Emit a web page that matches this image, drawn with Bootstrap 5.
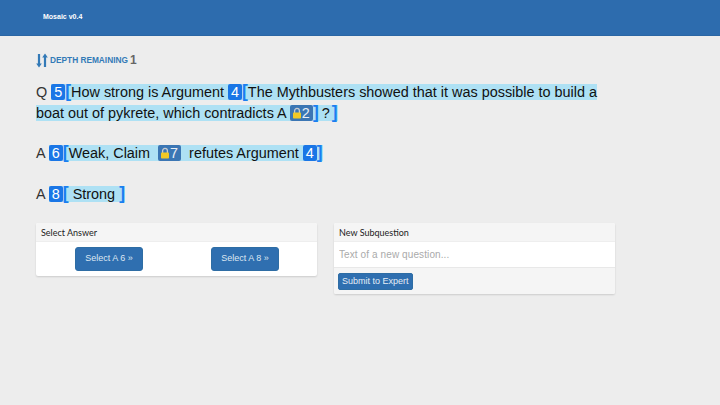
<!DOCTYPE html>
<html lang="en">
<head>
    <meta charset="UTF-8">
    <meta name="viewport" content="width=device-width, initial-scale=1.0">
    <title>Mosaic</title>
    <link href="https://cdn.jsdelivr.net/npm/bootstrap@5.3.3/dist/css/bootstrap.min.css" rel="stylesheet">
    <style>
        html, body { height: 100%; }
        body { background: #ededed; font-family: "Liberation Sans", Arial, sans-serif; color: #333; overflow: hidden; }
        .topbar { height: 36px; background: #2d6cae; border-bottom: 1px solid #2a66a4; padding: 0 0 0 43px; }
        .topbar-brand { color: #fff; font-size: 7px; font-weight: 700; padding: 0; margin: 0 0 1px; }
        .page-wrap { width: 615px; padding-left: 36px; }
        .depth-row { margin-top: 17px; height: 14px; color: #337ab7; font-size: 8.3px; font-weight: 700; gap: 2px; }
        .depth-num { color: #666; font-size: 12px; font-weight: 700; line-height: 14px; }
        .block-text { font-size: 14.42px; line-height: 21px; color: #333; margin: 0; width: 570px; }
        .block-q { margin-top: 15px; }
        .block-a1 { margin-top: 19px; }
        .block-a2 { margin-top: 20px; }
        .ptr-text { background: #aee1f4; color: #111; }
        .ptr-id { background: #1a76e6; color: #fff; border-radius: 2px; padding: 0 3px; }
        .ptr-locked { background: #3b76b4; color: #e8eef5; border-radius: 2px; padding: 0 3px 0 2px; }
        .ptr-brace { color: #1a7ff0; font-weight: 700; font-size: 17.5px; line-height: 15px; }
        .ptr-tail { padding: 0 2px 0 3px; }
        .lock-ico { width: 10px; height: 12px; vertical-align: -1px; }
        .panels { margin-top: 18px; gap: 17px; }
        .panel-box { width: 281px; border: 0; border-radius: 2px; box-shadow: 0 1px 2px rgba(0,0,0,.14); background: #fff; overflow: hidden; }
        .panel-head { font-family: Lato, sans-serif; font-size: 9px; line-height: 11px; color: #222; background: #f5f5f5; padding: 4px 5px 3px; height: 19px; border-bottom: 1px solid #eee; }
        .answer-body { height: 34px; padding: 5px 0 0 5px; }
        .answer-cell { width: 136px; }
        .btn-select { background: #2f6fb0; border: 1px solid #2e6da4; color: #dde7f2; font-size: 9px; width: 68px; height: 24px; padding: 0; border-radius: 3px; }
        .question-input { border: 0; border-radius: 0; font-size: 10px; height: 25px; padding: 0 5px; background: #fff; box-shadow: none; font-family: "Liberation Sans", sans-serif; }
        .question-input::placeholder { color: #aaa; letter-spacing: .1px; }
        .panel-foot { height: 27px; background: #f5f5f5; border-top: 1px solid #e8e8e8; padding: 5px 4px; }
        .btn-submit { background: #2f6fb0; border: 1px solid #2e6da4; color: #e6eef6; font-size: 9px; line-height: 1; height: 17px; padding: 0 3px; border-radius: 2px; }
    </style>
</head>
<body>
    <nav class="topbar d-flex align-items-center">
        <div class="topbar-brand">Mosaic v0.4</div>
    </nav>

    <div class="page-wrap">
        <div class="depth-row d-flex align-items-center">
            <svg width="12" height="15" viewBox="0 0 12 15" fill="#337ab7" aria-hidden="true"><path d="M1.9 1h2.2v9.4h1.7L3 14.4.2 10.4h1.7zM7.9 14h2.2V4.6h1.7L9 .6 6.2 4.6h1.7z"/></svg>
            <span class="text-uppercase">Depth Remaining</span>
            <span class="depth-num">1</span>
        </div>

        <p class="block-text block-q">Q <span class="ptr-text"><span class="ptr-id">5</span><span class="ptr-brace">[</span>How strong is Argument <span class="ptr-id">4</span><span class="ptr-brace">[</span>The Mythbusters showed that it was possible to build a boat out of pykrete, which contradicts A <span class="ptr-locked"><svg class="lock-ico" viewBox="0 0 10 12" aria-hidden="true"><path d="M2.6 6V3.8a2.4 2.4 0 0 1 4.8 0V6" fill="none" stroke="#c9ccd0" stroke-width="1.3"/><rect x="1" y="5.5" width="8" height="6" rx=".8" fill="#f2c927"/></svg>2</span><span class="ptr-brace">]</span><span class="ptr-tail">?</span><span class="ptr-brace">]</span></span></p>

        <p class="block-text block-a1">A <span class="ptr-text"><span class="ptr-id">6</span><span class="ptr-brace">[</span>Weak, Claim &nbsp;<span class="ptr-locked"><svg class="lock-ico" viewBox="0 0 10 12" aria-hidden="true"><path d="M2.6 6V3.8a2.4 2.4 0 0 1 4.8 0V6" fill="none" stroke="#c9ccd0" stroke-width="1.3"/><rect x="1" y="5.5" width="8" height="6" rx=".8" fill="#f2c927"/></svg>7</span>&nbsp; refutes Argument <span class="ptr-id">4</span><span class="ptr-brace">]</span></span></p>

        <p class="block-text block-a2">A <span class="ptr-text"><span class="ptr-id">8</span><span class="ptr-brace">[</span>&nbsp;Strong&nbsp;<span class="ptr-brace">]</span></span></p>

        <div class="panels d-flex align-items-start">
            <div class="panel-box card">
                <div class="panel-head">Select Answer</div>
                <div class="answer-body d-flex">
                    <div class="answer-cell d-flex justify-content-center"><button type="button" class="btn btn-select">Select A 6 »</button></div>
                    <div class="answer-cell d-flex justify-content-center"><button type="button" class="btn btn-select">Select A 8 »</button></div>
                </div>
            </div>
            <div class="panel-box card">
                <div class="panel-head">New Subquestion</div>
                <input type="text" class="form-control question-input" placeholder="Text of a new question...">
                <div class="panel-foot">
                    <button type="button" class="btn btn-submit d-block">Submit to Expert</button>
                </div>
            </div>
        </div>
    </div>

    <script src="https://cdn.jsdelivr.net/npm/bootstrap@5.3.3/dist/js/bootstrap.bundle.min.js"></script>
</body>
</html>
